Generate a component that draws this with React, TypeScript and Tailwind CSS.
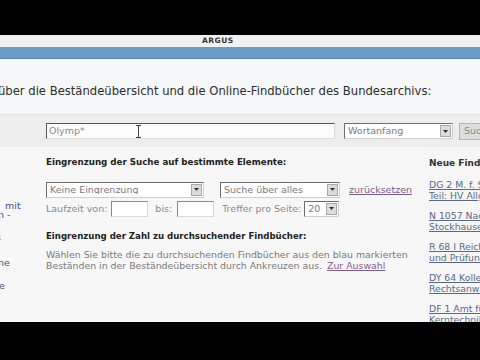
import React from "react";

const font = { fontFamily: '"DejaVu Sans", Verdana, sans-serif' };

function Select({ w, text, cls = "" }: { w: string; text: string; cls?: string }) {
  return (
    <div
      className={`${w} shrink-0 h-[16px] flex items-center justify-between bg-white border border-t-[#6f6f6f] border-l-[#6f6f6f] border-b-[#cfcfcf] border-r-[#cfcfcf] ${cls}`}
    >
      <span className="pl-[3px] text-[9.5px] leading-none text-[#7a7a7a] whitespace-nowrap overflow-hidden">{text}</span>
      <span className="w-[11px] h-[12px] mr-[1px] shrink-0 bg-[#dcdcdc] border border-[#a8a8a8] flex items-center justify-center">
        <svg width="5" height="3" viewBox="0 0 5 3"><path d="M0 0h5L2.5 3z" fill="#333" /></svg>
      </span>
    </div>
  );
}

function Input({ w }: { w: string }) {
  return (
    <div className={`${w} shrink-0 h-[16px] bg-white border border-t-[#8a8a8a] border-l-[#8a8a8a] border-b-[#d8d8d8] border-r-[#d8d8d8]`} />
  );
}

export default function App() {
  const links: [string, string][] = [
    ["DG 2 M. f. Staatssicherheit,", "Teil: HV Allgemein"],
    ["N 1057 Nachlass", "Stockhausen"],
    ["R 68 I Reichsamt", "und Prüfung"],
    ["DY 64 Kollegium der", "Rechtsanwälte"],
    ["DF 1 Amt für", "Kerntechnik"],
  ];
  return (
    <div className="w-[480px] h-[360px] overflow-hidden bg-black flex flex-col" style={font}>
      <div className="h-[35px] shrink-0 bg-black" />
      <div className="h-[12px] shrink-0 bg-[#f1f1f1] flex items-center">
        <span className="ml-[202px] text-[7.5px] font-bold tracking-[0.5px] text-[#333] leading-none">ARGUS</span>
      </div>
      <div className="h-[12px] shrink-0 bg-[#6a9cc7] border-b border-[#5a87ae]" />
      <div className="h-[55px] shrink-0 bg-[#f5f7f9] flex items-end pb-[16px]">
        <span className="ml-[-2px] text-[11.6px] leading-none text-[#2e2e2e] whitespace-nowrap">
          über die Beständeübersicht und die Online-Findbücher des Bundesarchivs:
        </span>
      </div>
      <div className="h-[33px] shrink-0 bg-[#ededed] border-t border-[#e2e2e2] flex items-center">
        <div className="ml-[46px] shrink-0 w-[289px] h-[16px] bg-[#fbfbfb] border border-t-[#555] border-l-[#555] border-b-[#dcdcdc] border-r-[#dcdcdc] flex items-center relative">
          <span className="pl-[2px] text-[9.5px] leading-none text-[#8a8a8a]">Olymp*</span>
          <svg className="absolute left-[88px] top-[1px]" width="7" height="13" viewBox="0 0 7 13">
            <path d="M1 0.5h5M1 12.5h5M3.5 0.5v12" stroke="#444" strokeWidth="1" fill="none" />
          </svg>
        </div>
        <Select w="w-[109px] ml-[9px]" text="Wortanfang" />
        <div className="ml-[6px] shrink-0 h-[17px] w-[40px] bg-[#dddddd] border border-[#b5b5b5] flex items-center pl-[4px] text-[9.5px] text-[#888]">Suchen</div>
      </div>
      <div className="h-[175px] shrink-0 bg-[#f7f7f7] flex">
        <div className="w-[46px] shrink-0 relative text-[9.5px] text-[#4a4a96] leading-none">
          <span className="absolute left-[5px] top-[54px]">mit</span>
          <span className="absolute left-[-2px] top-[63px]">n -</span>
          <span className="absolute left-[-4px] top-[86px]">s</span>
          <span className="absolute left-[-2px] top-[111px]">ne</span>
          <span className="absolute left-[-1px] top-[134px]">e</span>
        </div>
        <div className="w-[374px] shrink-0 flex flex-col pt-[11px] text-[#444]">
          <div className="text-[8.7px] font-bold leading-none text-[#222]">Eingrenzung der Suche auf bestimmte Elemente:</div>
          <div className="flex items-center mt-[15px]">
            <Select w="w-[158px]" text="Keine Eingrenzung" />
            <Select w="w-[120px] ml-[16px]" text="Suche über alles" />
            <span className="ml-[9px] text-[9.5px] leading-none text-[#7a5c8e] underline">zurücksetzen</span>
          </div>
          <div className="flex items-center mt-[3px] text-[9.5px] leading-none text-[#8a8a8a]">
            <span>Laufzeit von:</span>
            <Input w="w-[37px] ml-[4px]" />
            <span className="ml-[7px]">bis:</span>
            <Input w="w-[37px] ml-[5px]" />
            <span className="ml-[8px]">Treffer pro Seite:</span>
            <Select w="w-[35px] ml-[3px]" text="20" />
          </div>
          <div className="mt-[15px] text-[8.6px] font-bold leading-none text-[#222]">Eingrenzung der Zahl zu durchsuchender Findbücher:</div>
          <div className="mt-[9px] text-[9.4px] leading-[11px] text-[#7a7a7a] whitespace-nowrap">
            <div>Wählen Sie bitte die zu durchsuchenden Findbücher aus den blau markierten</div>
            <div>
              Beständen in der Beständeübersicht durch Ankreuzen aus.{" "}
              <span className="ml-[2px] text-[#8a5c8e] underline">Zur Auswahl</span>
            </div>
          </div>
        </div>
        <div className="w-[60px] shrink-0 bg-[#f6f6f6] pl-[9px] pt-[12px] overflow-hidden">
          <div className="text-[9px] font-bold leading-none text-[#333] whitespace-nowrap">Neue Findbücher</div>
          <div className="flex flex-col gap-[9px] mt-[11px]">
            {links.map(([a, b]) => (
              <div key={a} className="text-[9.3px] leading-[11px] text-[#5a6a86] underline whitespace-nowrap">
                <div>{a}</div>
                <div>{b}</div>
              </div>
            ))}
          </div>
        </div>
      </div>
      <div className="flex-1 bg-black" />
    </div>
  );
}
